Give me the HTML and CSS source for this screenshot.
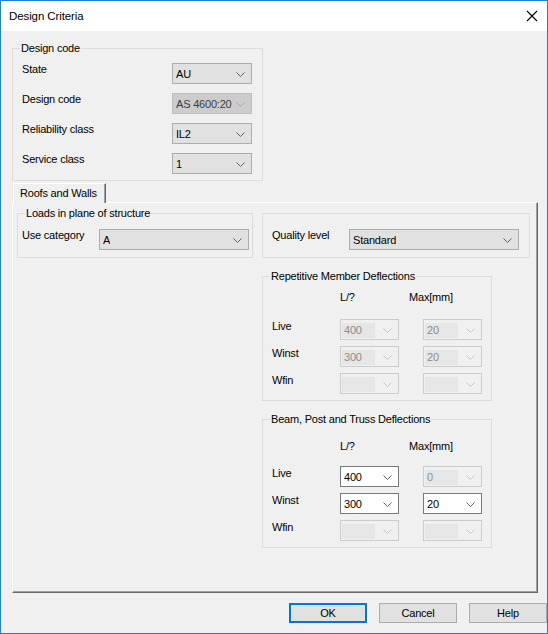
FILE: index.html
```html
<!DOCTYPE html>
<html lang="en">

<head>
    <meta charset="UTF-8">
    <title>Design Criteria</title>
    <link rel="stylesheet" href="styles.css">
</head>

<body>
    <div class="window">
        <div class="titlebar">
            <span class="title">Design Criteria</span>
            <svg class="close" width="12" height="12" viewBox="0 0 12 12">
                <path d="M1 1 L11 11 M11 1 L1 11" stroke="#000" stroke-width="1.1" fill="none" />
            </svg>
        </div>

        <div class="client">
            <fieldset class="group codeGroup">
                <legend>Design code</legend>
                <div class="row">
                    <span class="label">State</span>
                    <div class="combo list">
                        <span class="value">AU</span>
                        <svg class="arrow" width="9" height="5" viewBox="0 0 9 5"><path d="M0.5 0.5 L4.5 4.5 L8.5 0.5" /></svg>
                    </div>
                </div>
                <div class="row">
                    <span class="label">Design code</span>
                    <div class="combo list disabled">
                        <span class="value">AS 4600:20</span>
                        <svg class="arrow" width="9" height="5" viewBox="0 0 9 5"><path d="M0.5 0.5 L4.5 4.5 L8.5 0.5" /></svg>
                    </div>
                </div>
                <div class="row">
                    <span class="label">Reliability class</span>
                    <div class="combo list">
                        <span class="value">IL2</span>
                        <svg class="arrow" width="9" height="5" viewBox="0 0 9 5"><path d="M0.5 0.5 L4.5 4.5 L8.5 0.5" /></svg>
                    </div>
                </div>
                <div class="row">
                    <span class="label">Service class</span>
                    <div class="combo list">
                        <span class="value">1</span>
                        <svg class="arrow" width="9" height="5" viewBox="0 0 9 5"><path d="M0.5 0.5 L4.5 4.5 L8.5 0.5" /></svg>
                    </div>
                </div>
            </fieldset>

            <div class="tabs">
                <div class="tab">Roofs and Walls</div>
                <div class="tabPage">
                    <div class="topRow">
                        <fieldset class="group loads">
                            <legend>Loads in plane of structure</legend>
                            <div class="row">
                                <span class="label">Use category</span>
                                <div class="combo list wide">
                                    <span class="value">A</span>
                                    <svg class="arrow" width="9" height="5" viewBox="0 0 9 5"><path d="M0.5 0.5 L4.5 4.5 L8.5 0.5" /></svg>
                                </div>
                            </div>
                        </fieldset>
                        <fieldset class="group quality">
                            <div class="row">
                                <span class="label">Quality level</span>
                                <div class="combo list qualityCombo">
                                    <span class="value">Standard</span>
                                    <svg class="arrow" width="9" height="5" viewBox="0 0 9 5"><path d="M0.5 0.5 L4.5 4.5 L8.5 0.5" /></svg>
                                </div>
                            </div>
                        </fieldset>
                    </div>

                    <fieldset class="group defl repetitive">
                        <legend>Repetitive Member Deflections</legend>
                        <div class="deflGrid">
                            <span></span>
                            <span class="head">L/?</span>
                            <span class="head maxHead">Max[mm]</span>

                            <span class="label">Live</span>
                            <div class="combo edit off"><span class="value">400</span><svg class="arrow" width="9" height="5" viewBox="0 0 9 5"><path d="M0.5 0.5 L4.5 4.5 L8.5 0.5" /></svg></div>
                            <div class="combo edit off"><span class="value">20</span><svg class="arrow" width="9" height="5" viewBox="0 0 9 5"><path d="M0.5 0.5 L4.5 4.5 L8.5 0.5" /></svg></div>

                            <span class="label">Winst</span>
                            <div class="combo edit off"><span class="value">300</span><svg class="arrow" width="9" height="5" viewBox="0 0 9 5"><path d="M0.5 0.5 L4.5 4.5 L8.5 0.5" /></svg></div>
                            <div class="combo edit off"><span class="value">20</span><svg class="arrow" width="9" height="5" viewBox="0 0 9 5"><path d="M0.5 0.5 L4.5 4.5 L8.5 0.5" /></svg></div>

                            <span class="label">Wfin</span>
                            <div class="combo edit off"><span class="value"></span><svg class="arrow" width="9" height="5" viewBox="0 0 9 5"><path d="M0.5 0.5 L4.5 4.5 L8.5 0.5" /></svg></div>
                            <div class="combo edit off"><span class="value"></span><svg class="arrow" width="9" height="5" viewBox="0 0 9 5"><path d="M0.5 0.5 L4.5 4.5 L8.5 0.5" /></svg></div>
                        </div>
                    </fieldset>

                    <fieldset class="group defl beam">
                        <legend>Beam, Post and Truss Deflections</legend>
                        <div class="deflGrid">
                            <span></span>
                            <span class="head">L/?</span>
                            <span class="head maxHead">Max[mm]</span>

                            <span class="label">Live</span>
                            <div class="combo edit"><span class="value">400</span><svg class="arrow" width="9" height="5" viewBox="0 0 9 5"><path d="M0.5 0.5 L4.5 4.5 L8.5 0.5" /></svg></div>
                            <div class="combo edit off"><span class="value">0</span><svg class="arrow" width="9" height="5" viewBox="0 0 9 5"><path d="M0.5 0.5 L4.5 4.5 L8.5 0.5" /></svg></div>

                            <span class="label">Winst</span>
                            <div class="combo edit"><span class="value">300</span><svg class="arrow" width="9" height="5" viewBox="0 0 9 5"><path d="M0.5 0.5 L4.5 4.5 L8.5 0.5" /></svg></div>
                            <div class="combo edit"><span class="value">20</span><svg class="arrow" width="9" height="5" viewBox="0 0 9 5"><path d="M0.5 0.5 L4.5 4.5 L8.5 0.5" /></svg></div>

                            <span class="label">Wfin</span>
                            <div class="combo edit off"><span class="value"></span><svg class="arrow" width="9" height="5" viewBox="0 0 9 5"><path d="M0.5 0.5 L4.5 4.5 L8.5 0.5" /></svg></div>
                            <div class="combo edit off"><span class="value"></span><svg class="arrow" width="9" height="5" viewBox="0 0 9 5"><path d="M0.5 0.5 L4.5 4.5 L8.5 0.5" /></svg></div>
                        </div>
                    </fieldset>
                </div>
            </div>

            <div class="buttons">
                <button class="btn default">OK</button>
                <button class="btn">Cancel</button>
                <button class="btn">Help</button>
            </div>
        </div>
    </div>
</body>

</html>
```

FILE: styles.css
```css
* {
    box-sizing: border-box;
}

body {
    margin: 0;
    font-family: "Liberation Sans", Arial, sans-serif;
    font-size: 11px;
    letter-spacing: -0.2px;
    color: #000;
}

.window {
    width: 548px;
    height: 634px;
    border: 1px solid #1883d7;
    background: #f0f0f0;
}

.titlebar {
    height: 30px;
    background: #fff;
    display: flex;
    align-items: center;
    justify-content: space-between;
    padding: 0 9px 0 8px;
}

.title {
    font-size: 11.5px;
    letter-spacing: -0.1px;
}

.close {
    margin-top: -1px;
}

.client {
    padding-top: 11px;
}

/* group boxes */
.group {
    margin: 0;
    border: 1px solid #dcdcdc;
    min-width: 0;
}

.group legend {
    padding: 0 1px;
    margin-left: -2px;
    line-height: 13px;
    height: 13px;
}

.row {
    display: flex;
    justify-content: space-between;
    align-items: flex-start;
    height: 21px;
}

.label {
    line-height: 13px;
    white-space: nowrap;
}

.codeGroup {
    margin-left: 11px;
    width: 251px;
    padding: 8px 10px 6px 9px;
    display: flex;
    flex-direction: column;
    gap: 9px;
}

/* combo boxes */
.combo {
    height: 21px;
    display: flex;
    align-items: center;
    justify-content: space-between;
    padding: 1px 6px 0 3px;
    overflow: hidden;
}

.combo .value {
    white-space: nowrap;
    overflow: hidden;
    line-height: 13px;
}

.arrow {
    flex: none;
    fill: none;
    stroke: #606060;
    stroke-width: 1;
}

.list {
    width: 80px;
    background: #e1e1e1;
    border: 1px solid #adadad;
}

.list.disabled {
    background: #cccccc;
    border-color: #bfbfbf;
}

.list.disabled .value {
    color: #3c3c3c;
}

.list.disabled .arrow {
    stroke: #a8a8a8;
}

.wide {
    width: 150px;
}

.qualityCombo {
    width: 170px;
}

.edit {
    width: 59px;
    background: #fff;
    border: 1px solid #7a7a7a;
    padding: 1px 6px 0 1px;
}

.edit .value {
    flex: 1;
    margin-right: 8px;
    padding-left: 2px;
    height: 15px;
    line-height: 15px;
}

.edit.off {
    background: #f0f0f0;
    border-color: #cccccc;
    color: #8d8d8d;
}

.edit.off .value {
    background: #e6e6e6;
}

.edit.off .arrow {
    stroke: #c4c4c4;
}

/* tab control */
.tabs {
    margin-top: 2px;
}

.tab {
    position: relative;
    z-index: 1;
    margin-left: 12px;
    width: 93px;
    height: 20px;
    margin-bottom: -1px;
    background: #f0f0f0;
    border-top: 1px solid #fff;
    border-left: 1px solid #fff;
    border-right: 1px solid #696969;
    box-shadow: inset -1px 0 #a0a0a0;
    padding: 2px 0 0 6px;
    line-height: 14px;
}

.tabPage {
    margin-left: 11px;
    width: 526px;
    height: 391px;
    border-top: 1px solid #fff;
    border-left: 1px solid #fff;
    border-right: 1px solid #696969;
    border-bottom: 1px solid #696969;
    box-shadow: inset -1px -1px #a0a0a0;
    padding: 4px 0 0 4px;
}

.topRow {
    display: flex;
    align-items: flex-start;
    gap: 9px;
}

.loads {
    width: 236px;
    padding: 9px 3px 7px 4px;
}

.loads legend {
    margin-left: 3px;
}

.quality {
    margin-top: 6px;
    width: 268px;
    padding: 15px 10px 7px 9px;
}

.defl {
    margin-left: 245px;
    width: 230px;
    margin-top: 12px;
    padding: 8px 8px 6px 9px;
}

.beam {
    padding-top: 14px;
}

.deflGrid {
    display: grid;
    grid-template-columns: 68px 83px 60px;
    grid-template-rows: 22px 21px 21px 21px;
    row-gap: 6px;
}

.beam .deflGrid {
    grid-template-rows: 20px 21px 21px 21px;
}

.deflGrid .head {
    line-height: 13px;
}

.deflGrid .maxHead {
    margin-left: -14px;
}

.deflGrid .label {
    padding-top: 1px;
}

/* dialog buttons */
.buttons {
    display: flex;
    justify-content: flex-end;
    gap: 12px;
    margin-top: 10px;
}

.btn {
    width: 78px;
    height: 20px;
    padding: 0;
    font-family: inherit;
    font-size: 11px;
    letter-spacing: -0.2px;
    background: #e1e1e1;
    border: 1px solid #adadad;
    color: #000;
}

.btn.default {
    border: 2px solid #0078d7;
}
```
